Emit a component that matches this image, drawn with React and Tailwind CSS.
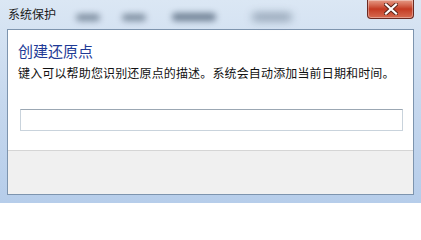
import React from "react";

export default function App() {
  return (
    <div
      className="relative flex h-[203px] w-[421px] flex-col overflow-hidden bg-gradient-to-b from-[#dbe7f4] via-[#c6d8ee] to-[#b6cdea]"
      style={{ fontFamily: '"Noto Sans CJK SC", "Noto Sans", sans-serif' }}
    >
      {/* title bar */}
      <div className="flex h-[29px] shrink-0 items-start">
        <div className="pl-[8px] pt-[5px] text-[12px] leading-[18px] text-[#1b1b1b]">系统保护</div>
        <div className="ml-[20px] mt-[13px] flex items-center opacity-80">
          <div className="h-[7px] w-[24px] rounded-full bg-[#66778a] blur-[3px]" />
          <div className="ml-[22px] h-[7px] w-[24px] rounded-full bg-[#66778a] blur-[3px]" />
          <div className="ml-[26px] h-[8px] w-[44px] rounded-full bg-[#56687d] blur-[3px]" />
          <div className="ml-[36px] h-[8px] w-[40px] rounded-full bg-[#7f90a3] blur-[4px]" />
        </div>
        <div className="ml-auto mr-[7px] flex h-[19px] w-[47px] items-center justify-center rounded-b-[4px] border border-t-0 border-[#6b2a22] bg-gradient-to-b from-[#e59a86] via-[#c43a22] to-[#d66a50] shadow-[inset_0_0_0_1px_rgba(255,255,255,0.35)]">
          <svg width="14" height="12" viewBox="0 0 14 12">
            <path d="M2 1.5 L12 10.5 M12 1.5 L2 10.5" stroke="#5a2318" strokeWidth="4" strokeLinecap="square" />
            <path d="M2 1.5 L12 10.5 M12 1.5 L2 10.5" stroke="#ffffff" strokeWidth="2.2" strokeLinecap="square" />
          </svg>
        </div>
      </div>
      {/* client area */}
      <div className="mx-[7px] mb-[8px] flex flex-1 flex-col border border-[#7d94ae] bg-white">
        <div className="flex h-[120px] flex-col pl-[10px] pt-[11px]">
          <div className="text-[15px] leading-[20px] text-[#1e3a96]">创建还原点</div>
          <div className="mt-[4px] text-[12px] leading-[16px] tracking-[0.15px] text-[#111]">
            键入可以帮助您识别还原点的描述。系统会自动添加当前日期和时间。
          </div>
          <div className="ml-[2px] mt-[28px] h-[22px] w-[383px] border border-[#c9d3dc] border-t-[#9ba7b3] bg-white" />
        </div>
        <div className="flex-1 border-t border-[#d5d5d5] bg-[#f0f0f0]" />
      </div>
    </div>
  );
}
